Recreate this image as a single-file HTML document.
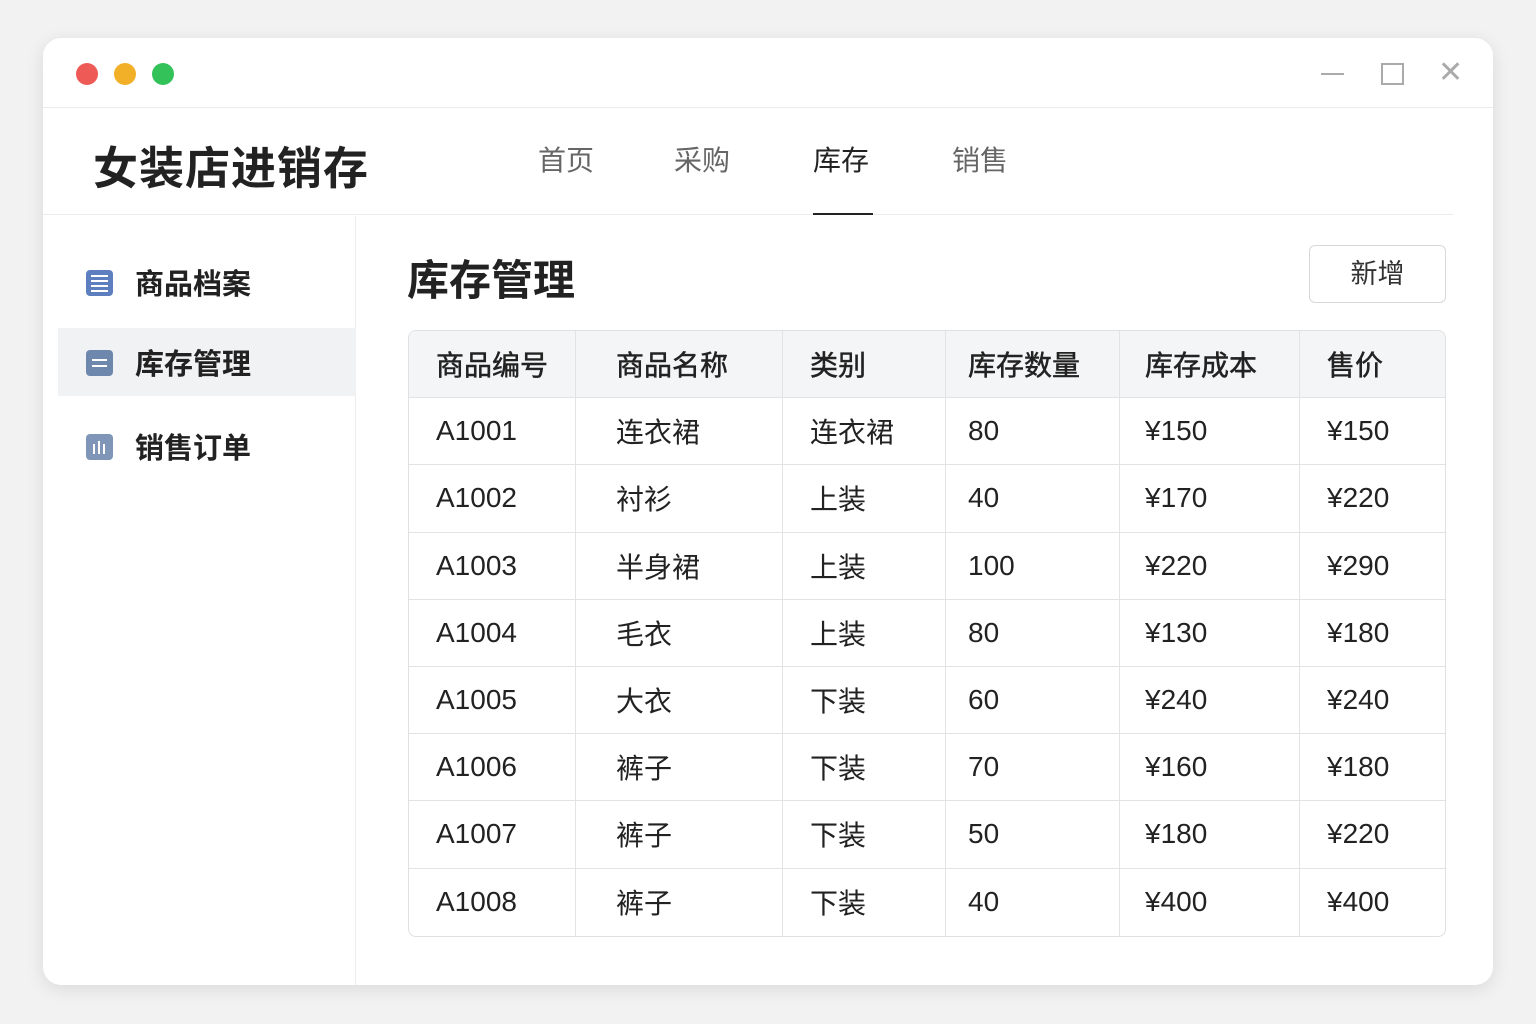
<!DOCTYPE html>
<html><head><meta charset="utf-8"><style>
*{margin:0;padding:0;box-sizing:border-box}
body{width:1536px;height:1024px;background:#f2f2f3;font-family:"Liberation Sans","Noto Sans CJK SC",sans-serif;position:relative;overflow:hidden;color:#222}
.win{position:absolute;left:43px;top:38px;width:1450px;height:947px;background:#fff;border-radius:18px;box-shadow:0 4px 18px rgba(0,0,0,.10);overflow:hidden}
.tb{position:absolute;left:0;top:0;width:100%;height:70px;border-bottom:1px solid #ececec}
.dot{position:absolute;top:25px;width:22px;height:22px;border-radius:50%}
.hdr{position:absolute;left:0;top:70px;width:1410px;height:107px;border-bottom:1px solid #ececec}
.logo{position:absolute;left:50px;top:24px;font-size:45px;font-weight:bold;color:#222;letter-spacing:1px}
.nav{position:absolute;top:31px;font-size:28px;color:#666}
.side{position:absolute;left:0;top:178px;width:313px;height:769px;border-right:1px solid #ececec}
.si{position:absolute;left:15px;width:298px;height:68px;font-size:29px;font-weight:bold;color:#222}
.si span{position:absolute;left:77px;top:13px}
.si i{position:absolute;left:28px;top:22px;width:27px;height:26px;border-radius:4px;background:#6e87ad}
.si i b{position:absolute;background:#fff}
h1{position:absolute;left:364px;top:209px;font-size:42px;font-weight:bold;color:#222}
.btn{position:absolute;left:1266px;top:207px;width:137px;height:58px;border:1px solid #d8d8d8;border-radius:6px;font-size:27px;text-align:center;line-height:56px;color:#333}
table{position:absolute;left:365px;top:292px;width:1038px;border-collapse:separate;border-spacing:0;border:1px solid #e0e0e0;border-radius:8px;overflow:hidden;font-size:28px}
td,th{height:67.2px;padding-left:27px;text-align:left;border-right:1px solid #e3e3e3;border-bottom:1px solid #e3e3e3;font-weight:normal;color:#222}
th{background:#f4f5f7;font-weight:normal;font-size:28px;color:#222;-webkit-text-stroke:0.5px #222}
tr td:last-child,tr th:last-child{border-right:none}
tr:last-child td{border-bottom:none}
</style></head><body>
<div class="win">
<div class="tb">
<div class="dot" style="left:33px;background:#ee5a55"></div>
<div class="dot" style="left:71px;background:#f2b028"></div>
<div class="dot" style="left:109px;background:#33c25a"></div>
<div style="position:absolute;left:1278px;top:35px;width:23px;height:2px;background:#aaa"></div>
<div style="position:absolute;left:1338px;top:25px;width:23px;height:22px;border:2px solid #aaa"></div>
<div style="position:absolute;left:1395px;top:20px;font-size:30px;color:#aaa;line-height:30px">✕</div>
</div>
<div class="hdr">
<div class="logo">女装店进销存</div>
<div class="nav" style="left:495px">首页</div>
<div class="nav" style="left:631px">采购</div>
<div class="nav" style="left:770px;color:#222">库存</div>
<div style="position:absolute;left:770px;top:105px;width:60px;height:2px;background:#222"></div>
<div class="nav" style="left:909px">销售</div>
</div>
<div class="side">
<div class="si" style="top:32px"><i style="background:#5d7fbf"><b style="left:5px;top:5px;width:17px;height:2px"></b><b style="left:5px;top:10px;width:17px;height:2px"></b><b style="left:5px;top:15px;width:17px;height:2px"></b><b style="left:5px;top:20px;width:17px;height:2px"></b></i><span>商品档案</span></div>
<div class="si" style="top:112px;background:#f1f2f4"><i><b style="left:6px;top:9px;width:15px;height:2px"></b><b style="left:6px;top:15px;width:15px;height:2px"></b></i><span>库存管理</span></div>
<div class="si" style="top:196px"><i style="background:#7f96b8"><b style="left:7px;top:10px;width:2px;height:10px"></b><b style="left:12px;top:7px;width:2px;height:13px"></b><b style="left:17px;top:10px;width:2px;height:10px"></b></i><span>销售订单</span></div>
</div>
<h1>库存管理</h1>
<div class="btn">新增</div>
<table>
<tr><th style="width:167px">商品编号</th><th style="width:207px;padding-left:40px">商品名称</th><th style="width:163px">类别</th><th style="width:174px;padding-left:22px">库存数量</th><th style="width:180px;padding-left:25px">库存成本</th><th>售价</th></tr>
<tr><td>A1001</td><td style="padding-left:40px">连衣裙</td><td>连衣裙</td><td style="padding-left:22px">80</td><td style="padding-left:25px">¥150</td><td>¥150</td></tr>
<tr><td>A1002</td><td style="padding-left:40px">衬衫</td><td>上装</td><td style="padding-left:22px">40</td><td style="padding-left:25px">¥170</td><td>¥220</td></tr>
<tr><td>A1003</td><td style="padding-left:40px">半身裙</td><td>上装</td><td style="padding-left:22px">100</td><td style="padding-left:25px">¥220</td><td>¥290</td></tr>
<tr><td>A1004</td><td style="padding-left:40px">毛衣</td><td>上装</td><td style="padding-left:22px">80</td><td style="padding-left:25px">¥130</td><td>¥180</td></tr>
<tr><td>A1005</td><td style="padding-left:40px">大衣</td><td>下装</td><td style="padding-left:22px">60</td><td style="padding-left:25px">¥240</td><td>¥240</td></tr>
<tr><td>A1006</td><td style="padding-left:40px">裤子</td><td>下装</td><td style="padding-left:22px">70</td><td style="padding-left:25px">¥160</td><td>¥180</td></tr>
<tr><td>A1007</td><td style="padding-left:40px">裤子</td><td>下装</td><td style="padding-left:22px">50</td><td style="padding-left:25px">¥180</td><td>¥220</td></tr>
<tr><td>A1008</td><td style="padding-left:40px">裤子</td><td>下装</td><td style="padding-left:22px">40</td><td style="padding-left:25px">¥400</td><td>¥400</td></tr>
</table>
</div>
</body></html>
